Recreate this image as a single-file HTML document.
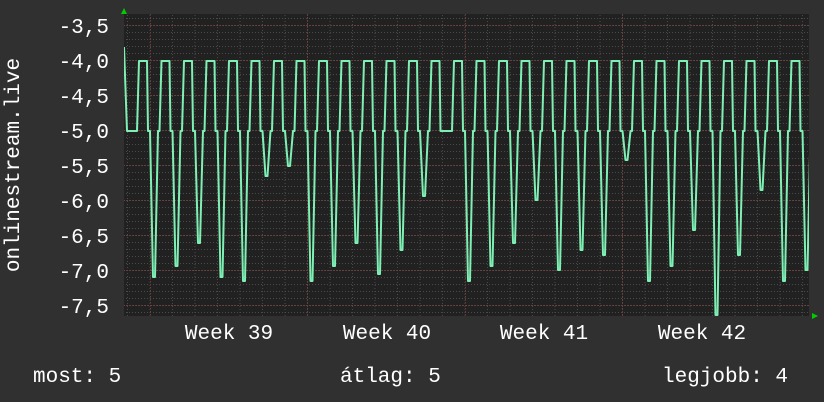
<!DOCTYPE html>
<html><head><meta charset="utf-8"><style>
html,body{margin:0;padding:0;background:#303030;}
svg{display:block}
text{font-family:"Liberation Mono","DejaVu Sans Mono",monospace;fill:#fff}
</style></head><body>
<svg width="824" height="402" viewBox="0 0 824 402" xmlns="http://www.w3.org/2000/svg">
<rect width="824" height="402" fill="#303030"/>
<rect x="124" y="14" width="685" height="302" fill="#212121"/>
<defs>
<pattern id="minh" x="0" y="25" width="3" height="7" patternUnits="userSpaceOnUse">
<rect x="0" y="0" width="1" height="1" fill="#4a4a4a"/>
</pattern>
<pattern id="minv" x="127" y="0" width="22.5" height="3" patternUnits="userSpaceOnUse">
<rect x="0" y="0" width="1" height="1" fill="#4a4a4a"/>
</pattern>
</defs>
<rect x="124" y="14" width="685" height="302" fill="url(#minh)"/>
<rect x="124" y="14" width="685" height="302" fill="url(#minv)"/>
<g stroke="#7a3a3a" stroke-width="1" stroke-dasharray="1,2">
<line x1="124" y1="25.5" x2="809" y2="25.5"/>
<line x1="124" y1="60.5" x2="809" y2="60.5"/>
<line x1="124" y1="95.5" x2="809" y2="95.5"/>
<line x1="124" y1="130.5" x2="809" y2="130.5"/>
<line x1="124" y1="165.5" x2="809" y2="165.5"/>
<line x1="124" y1="200.5" x2="809" y2="200.5"/>
<line x1="124" y1="235.5" x2="809" y2="235.5"/>
<line x1="124" y1="270.5" x2="809" y2="270.5"/>
<line x1="124" y1="305.5" x2="809" y2="305.5"/>
<line x1="150.5" y1="14" x2="150.5" y2="316"/>
<line x1="307.5" y1="14" x2="307.5" y2="316"/>
<line x1="465.5" y1="14" x2="465.5" y2="316"/>
<line x1="622.5" y1="14" x2="622.5" y2="316"/>
</g>
<svg x="124" y="14" width="685" height="302" viewBox="124 14 685 302" overflow="hidden">
<path fill="none" stroke="#7ef0b4" stroke-width="2" stroke-linejoin="round" d="M124 47 L127 131 L137 131
l2 -70 l8 0 l1 70 l2 0 l3 146 l2 0 l3 -146 l1.5 0
l2 -70 l8 0 l1 70 l2 0 l3 135 l2 0 l3 -135 l1.5 0
l2 -70 l8 0 l1 70 l2 0 l3 112 l2 0 l3 -112 l1.5 0
l2 -70 l8 0 l1 70 l2 0 l3 146 l2 0 l3 -146 l1.5 0
l2 -70 l8 0 l1 70 l2 0 l3 150 l2 0 l3 -150 l1.5 0
l2 -70 l8 0 l1 70 l2 0 l3 45 l2 0 l3 -45 l1.5 0
l2 -70 l8 0 l1 70 l2 0 l3 35 l2 0 l3 -35 l1.5 0
l2 -70 l8 0 l1 70 l2 0 l3 150 l2 0 l3 -150 l1.5 0
l2 -70 l8 0 l1 70 l2 0 l3 135 l2 0 l3 -135 l1.5 0
l2 -70 l8 0 l1 70 l2 0 l3 112 l2 0 l3 -112 l1.5 0
l2 -70 l8 0 l1 70 l2 0 l3 143 l2 0 l3 -143 l1.5 0
l2 -70 l8 0 l1 70 l2 0 l3 119 l2 0 l3 -119 l1.5 0
l2 -70 l8 0 l1 70 l2 0 l3 65 l2 0 l3 -65 l1.5 0
l2 -70 l8 0 l1 70 l2 0 l3 0 l2 0 l3 0 l1.5 0
l2 -70 l8 0 l1 70 l2 0 l3 150 l2 0 l3 -150 l1.5 0
l2 -70 l8 0 l1 70 l2 0 l3 135 l2 0 l3 -135 l1.5 0
l2 -70 l8 0 l1 70 l2 0 l3 112 l2 0 l3 -112 l1.5 0
l2 -70 l8 0 l1 70 l2 0 l3 69 l2 0 l3 -69 l1.5 0
l2 -70 l8 0 l1 70 l2 0 l3 139 l2 0 l3 -139 l1.5 0
l2 -70 l8 0 l1 70 l2 0 l3 119 l2 0 l3 -119 l1.5 0
l2 -70 l8 0 l1 70 l2 0 l3 124 l2 0 l3 -124 l1.5 0
l2 -70 l8 0 l1 70 l2 0 l3 29 l2 0 l3 -29 l1.5 0
l2 -70 l8 0 l1 70 l2 0 l3 150 l2 0 l3 -150 l1.5 0
l2 -70 l8 0 l1 70 l2 0 l3 135 l2 0 l3 -135 l1.5 0
l2 -70 l8 0 l1 70 l2 0 l3 99 l2 0 l3 -99 l1.5 0
l2 -70 l8 0 l1 70 l2 0 l3 184 l2 0 l3 -184 l1.5 0
l2 -70 l8 0 l1 70 l2 0 l3 124 l2 0 l3 -124 l1.5 0
l2 -70 l8 0 l1 70 l2 0 l3 59 l2 0 l3 -59 l1.5 0
l2 -70 l8 0 l1 70 l2 0 l3 150 l2 0 l3 -150 l1.5 0
l2 -70 l8 0 l1 70 l2 0 l3 139 l2 0 l3 -139 l1.5 0"/>
</svg>
<polygon points="121,14 127,14 124,8" fill="#00cc00"/>
<polygon points="812,313 812,319 818,316" fill="#00cc00"/>
<g font-size="21" text-anchor="end">
<text x="109" y="33">-3,5</text>
<text x="109" y="68">-4,0</text>
<text x="109" y="103">-4,5</text>
<text x="109" y="138">-5,0</text>
<text x="109" y="173">-5,5</text>
<text x="109" y="208">-6,0</text>
<text x="109" y="243">-6,5</text>
<text x="109" y="278">-7,0</text>
<text x="109" y="313">-7,5</text>
</g>
<g font-size="21" text-anchor="middle">
<text x="229" y="339">Week 39</text>
<text x="387" y="339">Week 40</text>
<text x="544" y="339">Week 41</text>
<text x="702" y="339">Week 42</text>
</g>
<text font-size="21" text-anchor="middle" transform="translate(19,165) rotate(-90)">onlinestream.live</text>
<g font-size="21">
<text x="33" y="382">most: 5</text>
<text x="340" y="382">átlag: 5</text>
<text x="662" y="382">legjobb: 4</text>
</g>
</svg>
</body></html>
